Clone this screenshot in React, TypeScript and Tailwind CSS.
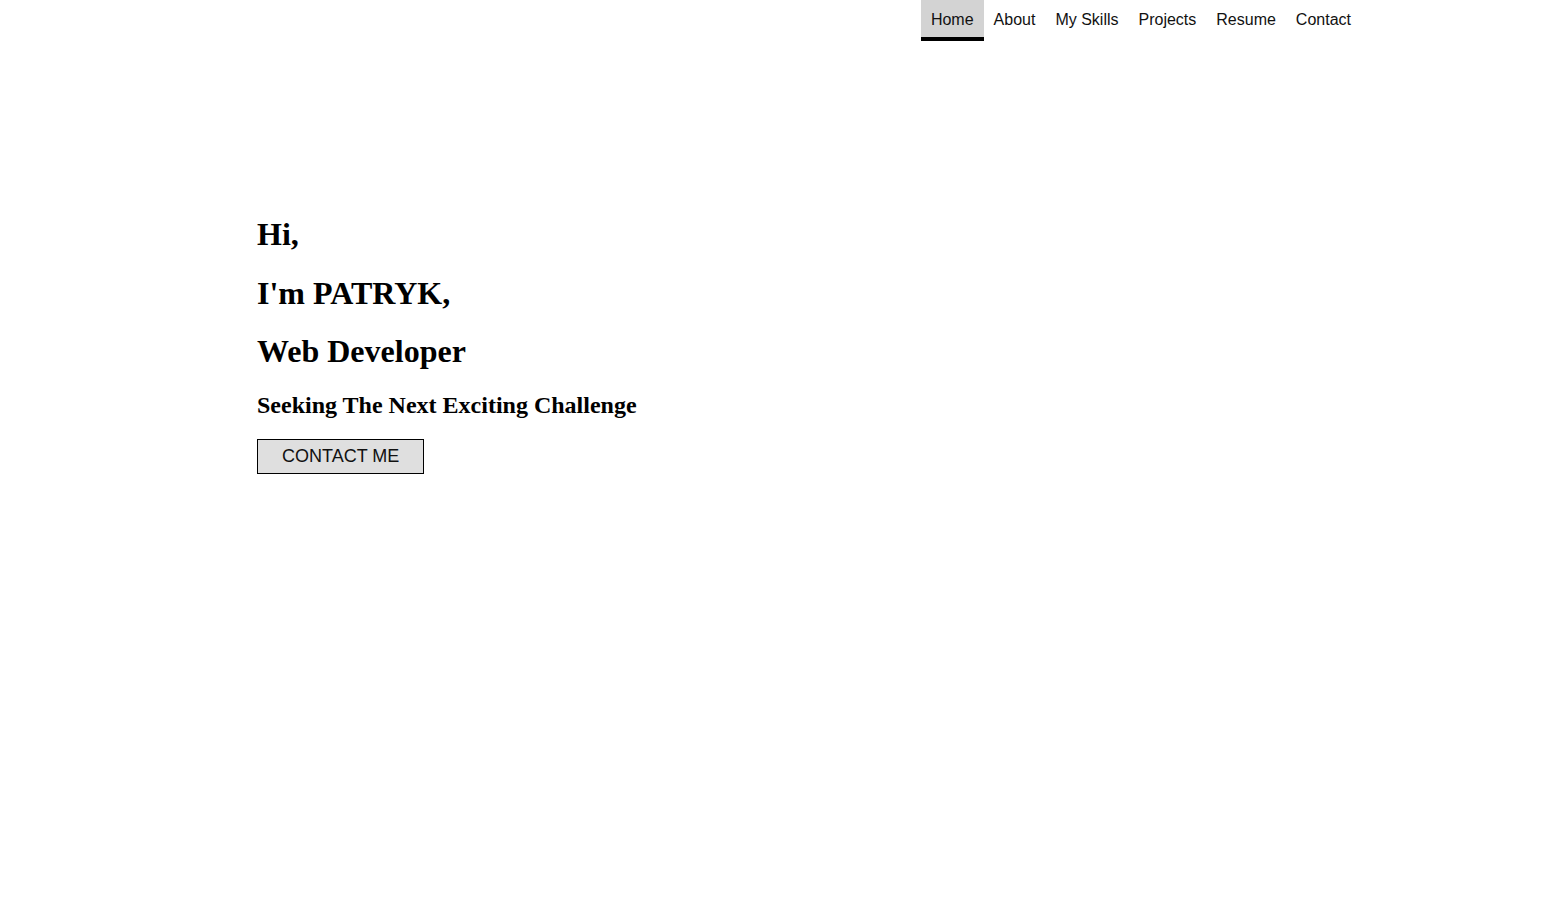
import React from "react";

const links = ["Home", "About", "My Skills", "Projects", "Resume", "Contact"];

export default function App() {
  return (
    <div className="min-h-[923px] bg-white text-black">
      <nav className="flex justify-end pr-[190px] font-['Liberation_Sans',Arial,sans-serif] text-[16px]">
        {links.map((l, i) => (
          <a
            key={l}
            href="#"
            className={
              i === 0
                ? "flex h-[41px] items-center px-[10px] pt-[2px] bg-[#d3d3d3] border-b-4 border-black text-[#111]"
                : "flex h-[41px] items-center px-[10px] pt-[2px] border-b-4 border-transparent text-[#111]"
            }
          >
            <span className="leading-[normal]">{l}</span>
          </a>
        ))}
      </nav>
      <section className="pl-[257px] pt-[154px] font-['Liberation_Serif','Times_New_Roman',serif]">
        <h1 className="mt-[21.44px] mb-[21.44px] text-[32px] font-bold leading-[normal]">Hi,</h1>
        <h1 className="my-[21.44px] text-[32px] font-bold leading-[normal]">I'm PATRYK,</h1>
        <h1 className="my-[21.44px] text-[32px] font-bold leading-[normal]">Web Developer</h1>
        <h2 className="mt-[21.44px] mb-[19.92px] text-[24px] font-bold leading-[normal]">
          Seeking The Next Exciting Challenge
        </h2>
        <button className="h-[35px] px-[24px] border border-black bg-[#dfdfdf] font-['Liberation_Sans',Arial,sans-serif] text-[18px] text-[#111] leading-[normal]">
          CONTACT ME
        </button>
      </section>
    </div>
  );
}
